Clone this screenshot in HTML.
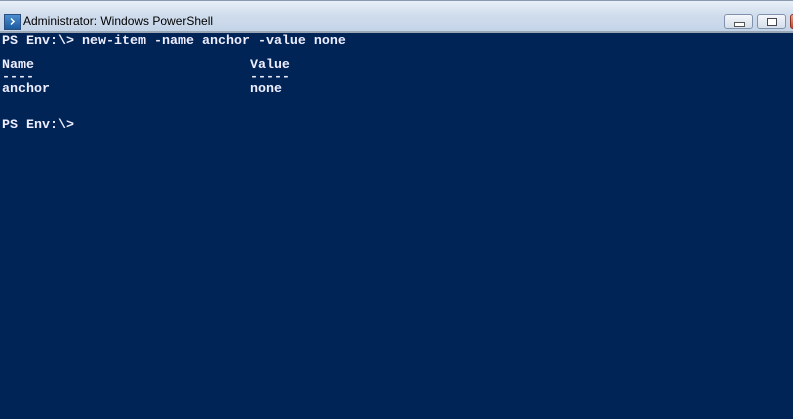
<!DOCTYPE html><html><head><style>
body{margin:0;width:793px;height:419px;overflow:hidden;background:#012456;position:relative;font-family:"Liberation Sans",sans-serif}
#tb{position:absolute;left:0;top:0;width:793px;height:31px;background:linear-gradient(#e9f0f8,#cfdcec 50%,#c4d4e8);border-top:1px solid #8a9bb0;box-sizing:border-box}
#line{position:absolute;left:0;top:31px;width:793px;height:2px;background:#9aa6b4}
#ic{position:absolute;left:4px;top:13px;width:15px;height:14px;background:linear-gradient(#4a8fd0,#1d5aa0);border:1px solid #2a4f80}
#ic:after{content:"";position:absolute;left:3px;top:3px;width:5px;height:5px;border-right:2px solid #fff;border-top:2px solid #fff;transform:rotate(45deg) scale(.7)}
#tt{position:absolute;left:23px;top:13px;font-size:12px;color:#000}
.b{position:absolute;top:13px;width:29px;height:15px;border:1px solid #8092ab;border-radius:3px;background:linear-gradient(#f4f7fb,#d4deea);box-sizing:border-box}
pre{position:absolute;left:2px;top:36px;margin:0;font-family:"Liberation Mono",monospace;font-weight:bold;font-size:13.33px;line-height:12px;color:#eef;}
</style></head><body>
<div id="tb"><div id="ic"></div><div id="tt">Administrator: Windows PowerShell</div>
<div class="b" style="left:724px"><div style="position:absolute;left:9px;top:7px;width:9px;height:3px;border:1px solid #555;background:#fff"></div></div>
<div class="b" style="left:757px"><div style="position:absolute;left:9px;top:3px;width:8px;height:6px;border:1px solid #445;background:#fff"></div></div>
<div class="b" style="left:790px;background:linear-gradient(#e8a090,#c84030);border-color:#8a3020"></div>
</div><div id="line"></div>
<pre>PS Env:\&gt; new-item -name anchor -value none

Name                           Value
----                           -----
anchor                         none


PS Env:\&gt;</pre>
</body></html>
